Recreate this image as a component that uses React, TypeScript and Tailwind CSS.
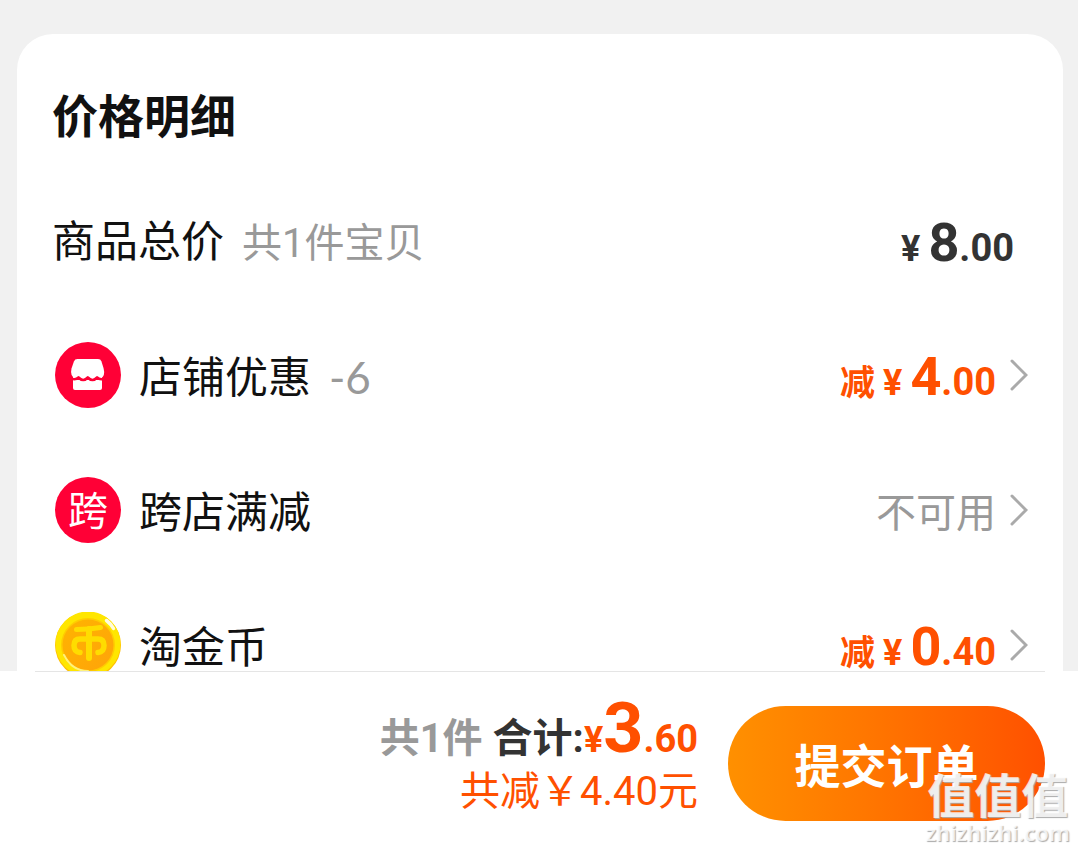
import { useId } from 'react'
import type { ReactNode } from 'react'

type PriceProps = {
  prefix?: string
  whole: string
  cents: string
}

function ShopIcon() {
  return (
    <svg viewBox="0 0 66 66" className="size-[66px]" aria-hidden="true">
      <circle cx="33" cy="33" r="33" fill="#ff0036" />
      <path
        d="M22.500 17h20.500q2.600 0 3.500 2.400l2 6.600q2.400 8.500-3.500 11H21q-6.500-2.500-4.500-10.500l2.400-7.100Q19.800 17 22.500 17Z"
        fill="#fff"
      />
      <path d="M18 34.500h29V46q0 2-2 2H20q-2 0-2-2Z" fill="#fff" />
      <path
        d="M14 35.500q6 3.500 9.500 0 4.700 5 9.300 0 4.700 5 9.300 0 3.500 3.500 9.900 0"
        fill="none"
        stroke="#ff0036"
        strokeWidth="2.600"
        strokeLinejoin="round"
      />
    </svg>
  )
}

function CrossShopIcon() {
  return (
    <span className="flex size-[66px] items-center justify-center rounded-full bg-[#ff0036] pb-1 text-[40px] leading-none text-white">
      跨
    </span>
  )
}

function CoinIcon() {
  const id = useId()

  return (
    <svg viewBox="0 0 66 66" className="size-[66px]" aria-hidden="true">
      <defs>
        <linearGradient id={id} x1="0" y1="0" x2="1" y2="1">
          <stop offset="0" stopColor="#ffb400" />
          <stop offset="1" stopColor="#ffa30a" />
        </linearGradient>
      </defs>
      <circle cx="33" cy="33" r="33" fill="#ffbe00" />
      <circle cx="33" cy="32" r="32.500" fill="#ffe600" />
      <circle cx="33" cy="33" r="27" fill="#ffcc00" />
      <circle cx="33" cy="33" r="25.500" fill={`url(#${id})`} />
      <path
        d="M9 43q8 16 24 16"
        fill="none"
        stroke="#fff27a"
        strokeWidth="2"
        strokeLinecap="round"
      />
      <g
        fill="none"
        stroke="#ffdc00"
        strokeWidth="5"
        strokeLinecap="round"
        strokeLinejoin="round"
      >
        <path d="M21.500 17.500q12 0 24-2" />
        <path
          d="M25 40.500q-6-.5-6-7t6-6.500h18q6 0 6 6.500t-6 7"
          strokeWidth="5.500"
        />
        <path d="M34 17v29" strokeWidth="6" />
      </g>
      <path
        d="M51.500 8.500q4.500 3.500 7 8"
        fill="none"
        stroke="#fffbe0"
        strokeWidth="3.500"
        strokeLinecap="round"
      />
    </svg>
  )
}

function Chevron() {
  return (
    <svg
      viewBox="0 0 18 32"
      className="h-8 w-[18px] shrink-0"
      fill="none"
      stroke="#aaa"
      strokeWidth="3"
      strokeLinecap="round"
      aria-hidden="true"
    >
      <path d="M2 2l14 14L2 30" />
    </svg>
  )
}

function Price({ prefix, whole, cents }: PriceProps) {
  return (
    <span className="flex items-baseline pt-3 font-[Roboto,'Noto_Sans_CJK_SC',sans-serif] text-[35px] leading-[54px] font-bold">
      {prefix}
      <span className="mx-2 text-[36px]">¥</span>
      <span className="text-[54px]">{whole}</span>
      <span className="text-[38px]">.{cents}</span>
    </span>
  )
}

type RowProps = {
  icon: ReactNode
  label: string
  note?: string
  children: ReactNode
}

function DiscountRow({ icon, label, note, children }: RowProps) {
  return (
    <li>
      <button
        type="button"
        className="flex h-[135px] w-full items-center pr-[35px] pl-[38px] text-left"
      >
        {icon}
        <span className="ml-[18px] text-[43px] text-[#111]">{label}</span>
        {note && (
          <span className="ml-[18px] pt-1 font-[Lato,sans-serif] text-[44px] text-[#999]">
            {note}
          </span>
        )}
        <span className="mr-[14px] ml-auto">{children}</span>
        <Chevron />
      </button>
    </li>
  )
}

export default function App() {
  return (
    <div className="relative flex h-screen flex-col overflow-hidden bg-[#f1f1f1] font-['Noto_Sans_CJK_SC',sans-serif]">
      <main className="mr-[15px] ml-[17px] min-h-0 flex-1 overflow-hidden pt-[34px]">
        <section className="rounded-t-[36px] bg-white pt-[45px]">
          <h1 className="h-[93px] pl-[35px] text-[46px] leading-[68px] font-bold text-[#111]">
            价格明细
          </h1>

          <div className="flex h-[135px] items-center justify-between pr-[49px] pl-[35px]">
            <p className="flex items-baseline gap-[18px] text-[43px] text-[#111]">
              商品总价
              <span className="font-[Roboto,'Noto_Sans_CJK_SC',sans-serif] text-[40px] text-[#999]">
                共1件宝贝
              </span>
            </p>
            <div className="text-[#333]">
              <Price whole="8" cents="00" />
            </div>
          </div>

          <ul className="text-[#ff5000]">
            <DiscountRow icon={<ShopIcon />} label="店铺优惠" note="-6">
              <Price prefix="减" whole="4" cents="00" />
            </DiscountRow>
            <DiscountRow icon={<CrossShopIcon />} label="跨店满减">
              <span className="text-[40px] text-[#999]">不可用</span>
            </DiscountRow>
            <DiscountRow icon={<CoinIcon />} label="淘金币">
              <Price prefix="减" whole="0" cents="40" />
            </DiscountRow>
          </ul>
        </section>
      </main>

      <footer className="shrink-0 bg-white pr-[33px] pl-[35px]">
        <div className="flex h-[177px] items-start justify-end gap-[30px] border-t border-[#e5e5e5] pt-[34px]">
          <div className="flex flex-col items-end font-[Roboto,'Noto_Sans_CJK_SC',sans-serif] text-[40px] text-[#ff5000]">
            <p className="flex h-[54px] items-baseline leading-[44px] font-bold">
              <span className="mr-[10px] text-[#999]">共1件</span>
              <span className="text-[#333]">合计:</span>
              <span className="text-[36px]">¥</span>
              <span className="text-[70px]">3</span>
              <span className="text-[38px]">.60</span>
            </p>
            <p className="leading-[64px]">共减￥4.40元</p>
          </div>
          <button
            type="button"
            className="h-[115px] w-[317px] rounded-full bg-linear-to-r from-[#ff9000] to-[#ff5000] text-[46px] font-bold text-white"
          >
            提交订单
          </button>
        </div>
      </footer>

      <div className="pointer-events-none absolute right-2 bottom-1 flex flex-col items-center text-white/80 text-shadow-[1px_1px_1px_#aaaaaa]">
        <span className="text-[47px] leading-[54px] font-bold">值值值</span>
        <span className="font-['Noto_Sans',sans-serif] text-[22px] leading-6 font-semibold">
          zhizhizhi.com
        </span>
      </div>
    </div>
  )
}
